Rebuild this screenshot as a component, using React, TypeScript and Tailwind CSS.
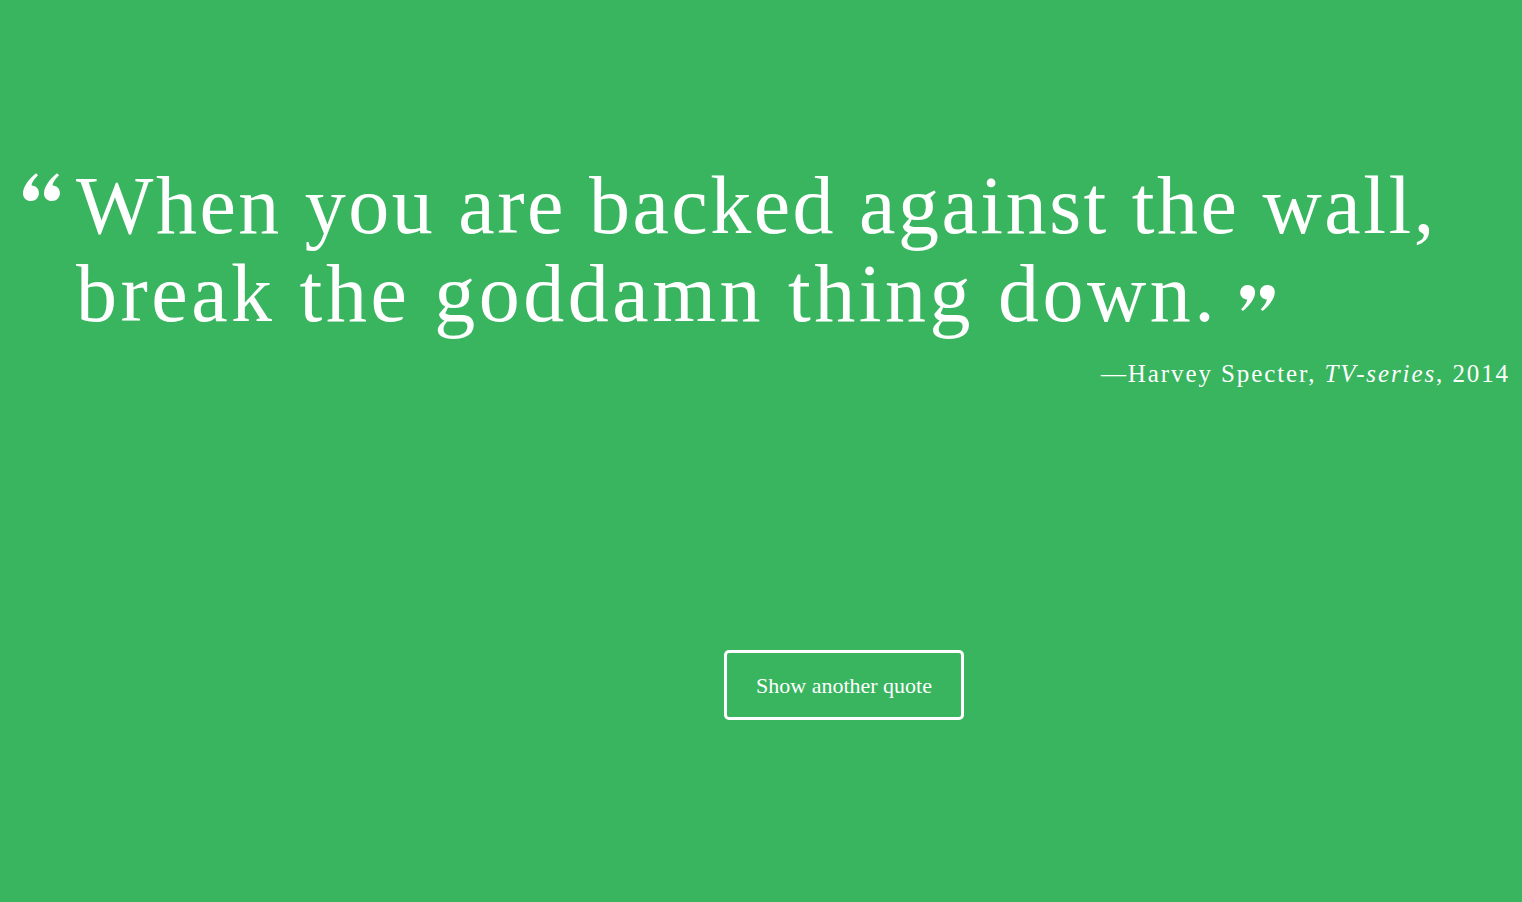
import React from "react";

const App = () => {
  return (
    <main
      className="min-h-[902px] w-full bg-[#38b55e] text-white flex flex-col"
      style={{ fontFamily: '"Liberation Serif", "DejaVu Serif", serif' }}
    >
      <section className="pt-[162px] pr-[12px]">
        <blockquote className="flex">
          <span className="w-[76px] shrink-0 flex justify-end pr-[14px] pt-[8px]">
            <svg width="40" height="32" viewBox="0 0 40 32" fill="white">
              <path d="M9 31c-4.6 0-8-3.2-8-7.6 0-6.5 5-13.6 13-20.2l2 2C11.3 10 9.6 13.3 9.6 15.6c4.4.3 7.3 3.2 7.3 7.4 0 4.6-3.4 8-7.9 8z" />
              <path d="M30 31c-4.6 0-8-3.2-8-7.6 0-6.5 5-13.6 13-20.2l2 2c-4.7 4.8-6.4 8.1-6.4 10.4 4.4.3 7.3 3.2 7.3 7.4 0 4.6-3.4 8-7.9 8z" />
            </svg>
          </span>
          <p className="text-[82px] leading-[88px]">
            <span className="tracking-[2.5px]">When you are backed against the wall,</span>
            <br />
            <span className="tracking-[3.5px]">break the goddamn thing down.</span>
            <span className="inline-block align-top ml-[20px] mt-[34px]">
              <svg width="38" height="30" viewBox="0 0 40 32" fill="white" className="rotate-180">
                <path d="M9 31c-4.6 0-8-3.2-8-7.6 0-6.5 5-13.6 13-20.2l2 2C11.3 10 9.6 13.3 9.6 15.6c4.4.3 7.3 3.2 7.3 7.4 0 4.6-3.4 8-7.9 8z" />
                <path d="M30 31c-4.6 0-8-3.2-8-7.6 0-6.5 5-13.6 13-20.2l2 2c-4.7 4.8-6.4 8.1-6.4 10.4 4.4.3 7.3 3.2 7.3 7.4 0 4.6-3.4 8-7.9 8z" />
              </svg>
            </span>
          </p>
        </blockquote>
        <p className="mt-[20px] text-right text-[25px] leading-[32px] tracking-[1.9px]">
          —Harvey Specter, <em>TV-series</em>, 2014
        </p>
      </section>
      <div className="flex justify-center pt-[260px] pl-[166px]">
        <button className="w-[240px] h-[70px] border-[3px] border-white rounded-[5px] text-[22px] text-white">
          Show another quote
        </button>
      </div>
    </main>
  );
};

export default App;
